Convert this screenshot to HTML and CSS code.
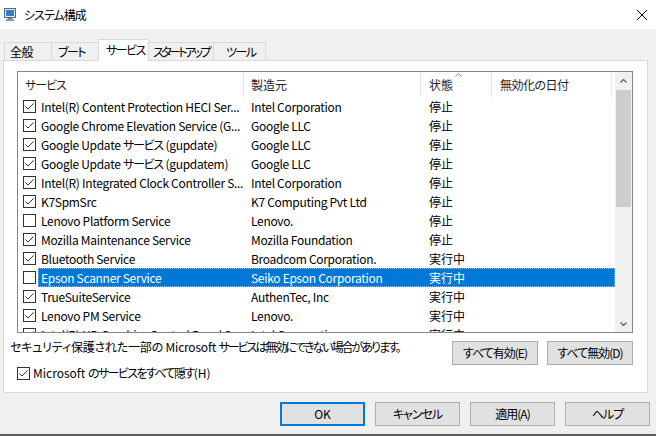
FILE: index.html
```html
<!DOCTYPE html>
<html lang="ja">
<head>
<meta charset="utf-8">
<title>システム構成</title>
<link rel="stylesheet" href="styles.css">
</head>
<body>
<div class="window">
  <header class="titlebar">
    <svg class="appicon" viewBox="0 0 12 13" width="12" height="13">
      <rect x="0.5" y="0.5" width="11" height="9" fill="#dfe6ee" stroke="#56667c"/>
      <rect x="2" y="2" width="8" height="6" fill="#3b7bcc"/>
      <rect x="4" y="10" width="4" height="1" fill="#6b778a"/>
      <rect x="2" y="11" width="8" height="2" fill="#8a97a8"/>
    </svg>
    <span class="title">システム構成</span>
    <svg class="close" viewBox="0 0 10 10" width="10" height="10">
      <path d="M0 0 L10 10 M10 0 L0 10" stroke="#000" stroke-width="1" fill="none"/>
    </svg>
  </header>

  <nav class="tabs">
    <div class="tab t1">全般</div>
    <div class="tab t2">ブート</div>
    <div class="tab t3 active">サービス</div>
    <div class="tab t4">スタートアップ</div>
    <div class="tab t5">ツール</div>
  </nav>

  <section class="panel">
    <div class="listbox">
      <div class="listmain">
        <div class="lhead">
          <div class="hc h1">サービス</div>
          <div class="hc h2">製造元</div>
          <div class="hc h3">状態<svg class="sort" viewBox="0 0 7 4" width="7" height="4"><path d="M0.5 3.5 L3.5 0.5 L6.5 3.5" fill="none" stroke="#8a8a8a" stroke-width="1"/></svg></div>
          <div class="hc h4">無効化の日付</div>
        </div>
        <div class="rows">
          <div class="row">
            <svg class="cb" viewBox="0 0 13 13"><rect x="0.5" y="0.5" width="12" height="12" fill="#fff" stroke="#333"/><path d="M2.5 6.5 L5 9 L10.5 3.5" fill="none" stroke="#333" stroke-width="1"/></svg>
            <div class="cells"><span class="c1">Intel(R) Content Protection HECI Ser...</span><span class="c2">Intel Corporation</span><span class="c3">停止</span></div>
          </div>
          <div class="row">
            <svg class="cb" viewBox="0 0 13 13"><rect x="0.5" y="0.5" width="12" height="12" fill="#fff" stroke="#333"/><path d="M2.5 6.5 L5 9 L10.5 3.5" fill="none" stroke="#333" stroke-width="1"/></svg>
            <div class="cells"><span class="c1">Google Chrome Elevation Service (G...</span><span class="c2">Google LLC</span><span class="c3">停止</span></div>
          </div>
          <div class="row">
            <svg class="cb" viewBox="0 0 13 13"><rect x="0.5" y="0.5" width="12" height="12" fill="#fff" stroke="#333"/><path d="M2.5 6.5 L5 9 L10.5 3.5" fill="none" stroke="#333" stroke-width="1"/></svg>
            <div class="cells"><span class="c1">Google Update <span class="kana">サービス</span> (gupdate)</span><span class="c2">Google LLC</span><span class="c3">停止</span></div>
          </div>
          <div class="row">
            <svg class="cb" viewBox="0 0 13 13"><rect x="0.5" y="0.5" width="12" height="12" fill="#fff" stroke="#333"/><path d="M2.5 6.5 L5 9 L10.5 3.5" fill="none" stroke="#333" stroke-width="1"/></svg>
            <div class="cells"><span class="c1">Google Update <span class="kana">サービス</span> (gupdatem)</span><span class="c2">Google LLC</span><span class="c3">停止</span></div>
          </div>
          <div class="row">
            <svg class="cb" viewBox="0 0 13 13"><rect x="0.5" y="0.5" width="12" height="12" fill="#fff" stroke="#333"/><path d="M2.5 6.5 L5 9 L10.5 3.5" fill="none" stroke="#333" stroke-width="1"/></svg>
            <div class="cells"><span class="c1">Intel(R) Integrated Clock Controller S...</span><span class="c2">Intel Corporation</span><span class="c3">停止</span></div>
          </div>
          <div class="row">
            <svg class="cb" viewBox="0 0 13 13"><rect x="0.5" y="0.5" width="12" height="12" fill="#fff" stroke="#333"/><path d="M2.5 6.5 L5 9 L10.5 3.5" fill="none" stroke="#333" stroke-width="1"/></svg>
            <div class="cells"><span class="c1">K7SpmSrc</span><span class="c2">K7 Computing Pvt Ltd</span><span class="c3">停止</span></div>
          </div>
          <div class="row">
            <svg class="cb" viewBox="0 0 13 13"><rect x="0.5" y="0.5" width="12" height="12" fill="#fff" stroke="#333"/></svg>
            <div class="cells"><span class="c1">Lenovo Platform Service</span><span class="c2">Lenovo.</span><span class="c3">停止</span></div>
          </div>
          <div class="row">
            <svg class="cb" viewBox="0 0 13 13"><rect x="0.5" y="0.5" width="12" height="12" fill="#fff" stroke="#333"/><path d="M2.5 6.5 L5 9 L10.5 3.5" fill="none" stroke="#333" stroke-width="1"/></svg>
            <div class="cells"><span class="c1">Mozilla Maintenance Service</span><span class="c2">Mozilla Foundation</span><span class="c3">停止</span></div>
          </div>
          <div class="row">
            <svg class="cb" viewBox="0 0 13 13"><rect x="0.5" y="0.5" width="12" height="12" fill="#fff" stroke="#333"/><path d="M2.5 6.5 L5 9 L10.5 3.5" fill="none" stroke="#333" stroke-width="1"/></svg>
            <div class="cells"><span class="c1">Bluetooth Service</span><span class="c2">Broadcom Corporation.</span><span class="c3">実行中</span></div>
          </div>
          <div class="row sel">
            <svg class="cb" viewBox="0 0 13 13"><rect x="0.5" y="0.5" width="12" height="12" fill="#fff" stroke="#333"/></svg>
            <div class="cells"><span class="c1">Epson Scanner Service</span><span class="c2">Seiko Epson Corporation</span><span class="c3">実行中</span></div>
          </div>
          <div class="row">
            <svg class="cb" viewBox="0 0 13 13"><rect x="0.5" y="0.5" width="12" height="12" fill="#fff" stroke="#333"/><path d="M2.5 6.5 L5 9 L10.5 3.5" fill="none" stroke="#333" stroke-width="1"/></svg>
            <div class="cells"><span class="c1">TrueSuiteService</span><span class="c2">AuthenTec, Inc</span><span class="c3">実行中</span></div>
          </div>
          <div class="row">
            <svg class="cb" viewBox="0 0 13 13"><rect x="0.5" y="0.5" width="12" height="12" fill="#fff" stroke="#333"/><path d="M2.5 6.5 L5 9 L10.5 3.5" fill="none" stroke="#333" stroke-width="1"/></svg>
            <div class="cells"><span class="c1">Lenovo PM Service</span><span class="c2">Lenovo.</span><span class="c3">実行中</span></div>
          </div>
          <div class="row">
            <svg class="cb" viewBox="0 0 13 13"><rect x="0.5" y="0.5" width="12" height="12" fill="#fff" stroke="#333"/><path d="M2.5 6.5 L5 9 L10.5 3.5" fill="none" stroke="#333" stroke-width="1"/></svg>
            <div class="cells"><span class="c1">Intel(R) HD Graphics Control Panel Se...</span><span class="c2">Intel Corporation</span><span class="c3">実行中</span></div>
          </div>
        </div>
      </div>
      <div class="vscroll">
        <div class="sbtn"><svg viewBox="0 0 7 4" width="7" height="4"><path d="M0.5 3.5 L3.5 0.5 L6.5 3.5" fill="none" stroke="#606060" stroke-width="1.3"/></svg></div>
        <div class="track"><div class="thumb"></div></div>
        <div class="sbtn"><svg viewBox="0 0 7 4" width="7" height="4"><path d="M0.5 0.5 L3.5 3.5 L6.5 0.5" fill="none" stroke="#606060" stroke-width="1.3"/></svg></div>
      </div>
    </div>

    <div class="noterow">
      <span class="note">セキュリティ保護された一部の Microsoft <span class="kana2">サービスは無効にできない場合があります。</span></span>
      <div class="btngroup">
        <button class="btn wide">すべて有効(E)</button>
        <button class="btn wide">すべて無効(D)</button>
      </div>
    </div>
    <label class="hiderow">
      <svg class="cb" viewBox="0 0 13 13"><rect x="0.5" y="0.5" width="12" height="12" fill="#fff" stroke="#333"/><path d="M2.5 6.5 L5 9 L10.5 3.5" fill="none" stroke="#333" stroke-width="1"/></svg>
      <span class="hidetext">Microsoft <span class="kana2">のサービスをすべて隠す</span>(H)</span>
    </label>
  </section>

  <footer class="footer">
    <button class="btn default">OK</button>
    <button class="btn">キャンセル</button>
    <button class="btn">適用(A)</button>
    <button class="btn">ヘルプ</button>
  </footer>
</div>
</body>
</html>
```

FILE: styles.css
```css
* { box-sizing: border-box; }
html, body { margin: 0; padding: 0; }
body {
  width: 656px;
  height: 436px;
  overflow: hidden;
  background: #f0f0f0;
  font-family: "Noto Sans CJK JP", "Noto Sans", sans-serif;
  font-size: 12px;
  color: #000;
  font-feature-settings: "palt";
}
.window {
  display: flex;
  flex-direction: column;
  height: 436px;
  border-bottom: 2px solid #5c5c5c;
}

/* title bar */
.titlebar {
  flex: none;
  height: 29px;
  background: #fff;
  display: flex;
  align-items: center;
}
.appicon { margin-left: 4px; flex: none; }
.title { margin-left: 8px; line-height: 16px; letter-spacing: -1px; }
.close { margin-left: auto; margin-right: 9px; flex: none; }

/* tabs */
.tabs {
  flex: none;
  height: 31px;
  display: flex;
  align-items: flex-end;
  padding-left: 4px;
  position: relative;
  z-index: 1;
}
.tab {
  height: 18px;
  line-height: 17px;
  border: 1px solid #d9d9d9;
  border-bottom: none;
  background: #f0f0f0;
  margin-left: -1px;
  white-space: nowrap;
  overflow: hidden;
  flex: none;
  letter-spacing: -1.5px;
}
.tab.active {
  height: 22px;
  line-height: 19px;
  background: #fff;
  margin-bottom: -1px;
}
.t1 { margin-left: 0; width: 48px; padding-left: 5px; letter-spacing: -0.5px; }
.t2 { width: 48px; padding-left: 6px; }
.t3 { width: 51px; padding-left: 7px; }
.t4 { width: 66px; padding-left: 4px; letter-spacing: -2.6px; }
.t5 { width: 53px; padding-left: 12px; }

/* panel */
.panel {
  flex: none;
  margin-left: 3px;
  width: 645px;
  height: 333px;
  background: #fff;
  border: 1px solid #d9d9d9;
  padding: 10px 14px 0 6px;
}
.listbox {
  margin-left: 7px;
  width: 616px;
  height: 262px;
  border: 1px solid #828790;
  display: flex;
  background: #fff;
}
.listmain {
  flex: 1;
  min-width: 0;
  overflow: hidden;
}
.lhead { display: flex; height: 25px; }
.hc {
  height: 25px;
  line-height: 25px;
  border-right: 1px solid #e5e5e5;
  padding-left: 7px;
  color: #1e1e1e;
  white-space: nowrap;
}
.h1 { width: 226px; letter-spacing: -1px; }
.h2 { width: 177px; }
.h3 { width: 71px; padding-left: 8px; position: relative; }
.h4 { width: 120px; padding-left: 8px; letter-spacing: -0.5px; }
.sort { position: absolute; left: 34px; top: 1px; }

.rows { height: 235px; overflow: hidden; }
.row { display: flex; align-items: center; height: 19px; }
.cb { width: 13px; height: 13px; flex: none; display: block; }
.row .cb { margin-left: 5px; margin-right: 2px; }
.cells {
  flex: 1;
  display: flex;
  height: 19px;
  line-height: 19px;
  white-space: nowrap;
  letter-spacing: -0.3px;
}
.cells > span { overflow: hidden; flex: none; }
.kana { letter-spacing: -1.2px; }
.c1 { width: 206px; padding-left: 3px; }
.c2 { width: 177px; padding-left: 7px; }
.c3 { width: 71px; padding-left: 8px; letter-spacing: 0; }
.sel .cells {
  background: #0078d7;
  color: #fff;
  outline: 1px dotted #8ec3ef;
  outline-offset: -1px;
}

/* scrollbar */
.vscroll {
  flex: none;
  width: 17px;
  background: #f0f0f0;
  display: flex;
  flex-direction: column;
}
.sbtn {
  height: 17px;
  flex: none;
  display: flex;
  align-items: center;
  justify-content: center;
}
.track { flex: 1; padding: 1px 1px 0 1px; }
.thumb { height: 117px; background: #cdcdcd; }

/* below list */
.noterow {
  display: flex;
  margin-top: 6px;
  height: 26px;
}
.note { flex: 1; line-height: 16px; white-space: nowrap; letter-spacing: -0.2px; }
.kana2 { letter-spacing: -2px; }
.btngroup { display: flex; gap: 9px; margin-top: 2px; }
.btn {
  font: inherit;
  font-feature-settings: "palt";
  color: #000;
  width: 85px;
  height: 24px;
  padding: 0;
  background: #e1e1e1;
  border: 1px solid #adadad;
  line-height: 20px;
  letter-spacing: -1px;
}
.btn.wide { width: 86px; }
.btn.default { border: 2px solid #0078d7; letter-spacing: 0; }
.hiderow {
  display: flex;
  align-items: center;
  height: 16px;
  padding-left: 7px;
}
.hidetext { margin-left: 3px; line-height: 16px; white-space: nowrap; }
.hidetext .kana2 { letter-spacing: -1.6px; }

/* footer */
.footer {
  flex: none;
  height: 41px;
  display: flex;
  justify-content: flex-end;
  align-items: flex-start;
  gap: 10px;
  padding: 9px 6px 0 0;
}
```
